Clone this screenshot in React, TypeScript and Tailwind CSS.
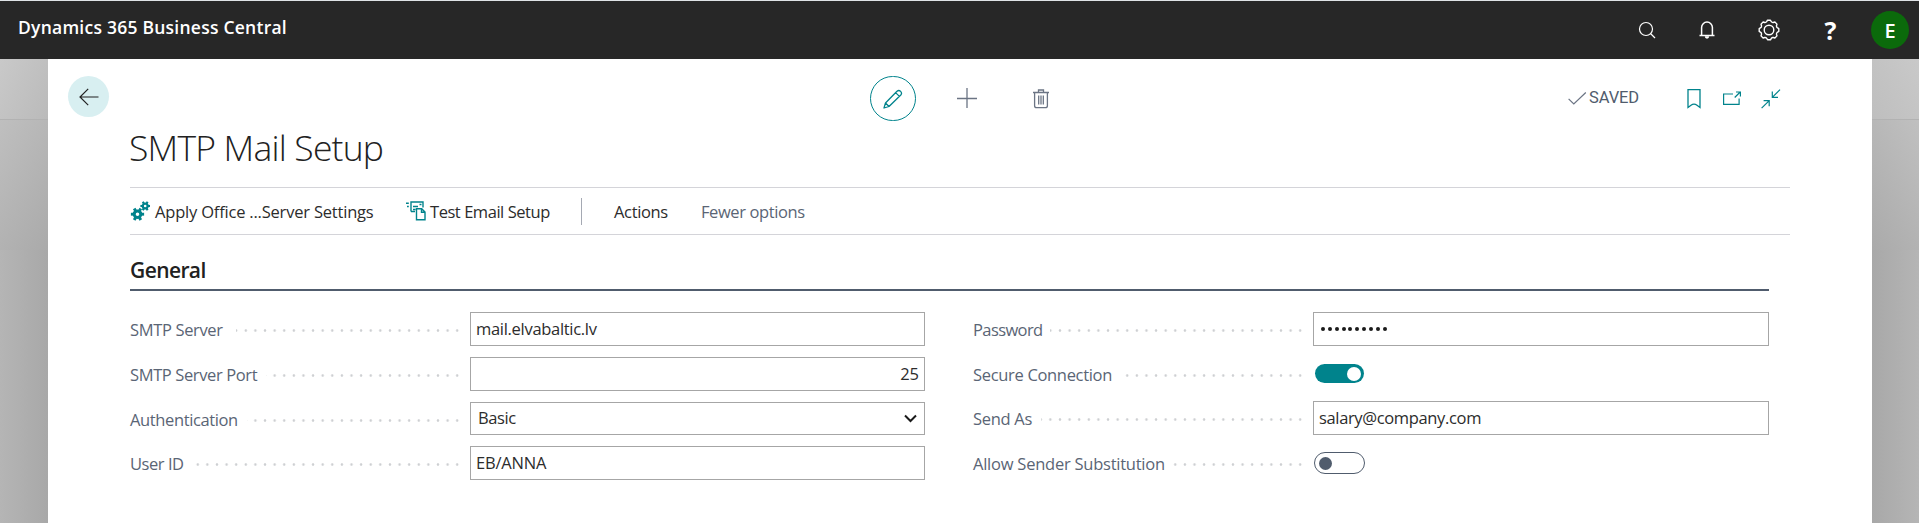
import React from "react";

type FieldProps = {
  label: string;
  labelClass: string;
  children: React.ReactNode;
  rowClass?: string;
};

function Field({ label, labelClass, children, rowClass = "h-[45px]" }: FieldProps) {
  return (
    <div className={`flex items-start ${rowClass}`}>
      <div className="flex w-[332px] shrink-0 items-center pt-[3px]">
        <span
          className={`shrink-0 whitespace-nowrap text-[16.5px] leading-[30px] text-[#5a6575] ${labelClass}`}
        >
          {label}
        </span>
        <span className="h-[9px] grow bg-[radial-gradient(circle,#cdcfd2_0.9px,transparent_1.6px)] bg-[length:9.62px_9px] bg-right bg-repeat-x" />
      </div>
      <div className="ml-[8px] grow">{children}</div>
    </div>
  );
}

function Box({ children, className = "" }: { children: React.ReactNode; className?: string }) {
  return (
    <div
      className={`flex items-center border border-[#a6a6a6] bg-white text-[16.5px] text-[#2c2c2c] ${className}`}
    >
      {children}
    </div>
  );
}

function Gear({ cx, cy, r }: { cx: number; cy: number; r: number }) {
  return (
    <g>
      <circle cx={cx} cy={cy} r={r * 0.5} fill="none" stroke="#00838c" strokeWidth={r * 0.46} />
      {[0, 60, 120, 180, 240, 300].map((a) => (
        <rect
          key={a}
          x={cx - r * 0.22}
          y={cy - r}
          width={r * 0.44}
          height={r * 0.42}
          fill="#00838c"
          transform={`rotate(${a + 30} ${cx} ${cy})`}
        />
      ))}
    </g>
  );
}

const cog = (() => {
  const pts: string[] = [];
  const n = 8;
  for (let i = 0; i < n; i++) {
    const a = (i / n) * Math.PI * 2 - Math.PI / 2;
    const p = (r: number, d: number) =>
      `${(11 + r * Math.cos(a + d)).toFixed(2)} ${(11 + r * Math.sin(a + d)).toFixed(2)}`;
    pts.push(`${i === 0 ? "M" : "L"}${p(9.9, -0.15)} L${p(9.9, 0.15)} L${p(8.6, 0.27)} Q${p(7.9, 0.39)} ${p(8.6, 0.51)}`);
  }
  return pts.join(" ") + "Z";
})();

export default function App() {
  return (
    <div className="flex h-[523px] w-full flex-col overflow-hidden bg-[#272727] font-['Open_Sans','Noto_Sans',sans-serif]">
      <div className="h-px shrink-0 bg-[#dfe3e6]" />
      <header className="flex h-[58px] shrink-0 items-center justify-between bg-[#272727] pl-[18px] pr-[10px] text-white">
        <span className="mb-[5px] whitespace-nowrap text-[17.5px] font-semibold tracking-[0.24px]">
          Dynamics 365 Business Central
        </span>
        <div className="flex items-center">
          <svg className="mr-[42px]" width="18" height="18" viewBox="0 0 18 18" fill="none" stroke="white" strokeWidth="1.2">
            <circle cx="8" cy="8" r="6.5" />
            <path d="M12.500 12.500 17 17" />
          </svg>
          <svg className="mr-[42px]" width="18" height="18" viewBox="0 0 18 18" fill="none" stroke="white" strokeWidth="1.5">
            <path d="M3.600 14.300V6.500a5.400 5.400 0 0 1 10.800 0v7.800M1.500 14.600h15" />
            <path d="M6.800 15.300a2.200 2.400 0 0 0 4.400 0z" fill="white" stroke="none" />
          </svg>
          <svg className="mr-[44px]" width="22" height="22" viewBox="0 0 22 22" fill="none" stroke="white" strokeWidth="1.4">
            <path d={cog} strokeLinejoin="round" />
            <circle cx="11" cy="11" r="4.8" />
          </svg>
          <span className="mr-[34px] w-[13px] text-center text-[25px] font-bold leading-[30px]">?</span>
          <div className="flex h-[38px] w-[38px] items-center justify-center rounded-full bg-[#0b6a0b] pt-[2px] text-[20px] font-semibold">
            E
          </div>
        </div>
      </header>

      <div className="flex grow">
        <aside className="flex w-[48px] shrink-0 flex-col">
          <div className="h-[61px] border-b border-[#b2b2b2] bg-[linear-gradient(115deg,#c9c9c9,#bababa)]" />
          <div className="h-[130px] bg-[linear-gradient(120deg,#bfbfbf,#aaaaaa)]" />
          <div className="grow bg-[linear-gradient(90deg,#b5b5b5,#a8a8a8)]" />
        </aside>

        <main className="flex grow flex-col bg-white">
          <div className="flex h-[62px] shrink-0 items-start pl-[20px] pt-[17px]">
            <div className="flex h-[41px] w-[41px] items-center justify-center rounded-full bg-[#d8eff1]">
              <svg width="20" height="18" viewBox="0 0 20 18" fill="none" stroke="#212121" strokeWidth="1.2">
                <path d="M19.500 9H1M9.200 .8 1 9l8.200 8.200" />
              </svg>
            </div>
            <div className="ml-[761px] flex h-[45px] w-[46px] items-center justify-center rounded-full border border-[#00838c]">
              <svg width="20" height="20" viewBox="0 0 20 20" fill="none" stroke="#00838c" strokeWidth="1.3" strokeLinejoin="round">
                <path d="M1 19l1.500-5L14 2.200a2.700 2.700 0 0 1 3.800 3.800L6 17.500zM2.500 14 6 17.500M12.600 3.600l3.800 3.800" />
              </svg>
            </div>
            <svg className="ml-[41px] mt-[12px]" width="20" height="20" viewBox="0 0 20 20" fill="none" stroke="#6b7484" strokeWidth="1.3">
              <path d="M0 10.500h20M10 0v20" />
            </svg>
            <svg className="ml-[55px] mt-[13px]" width="18" height="20" viewBox="0 0 18 20" fill="none" stroke="#6b7484" strokeWidth="1.3">
              <path d="M1 3.500h16M2.600 3.500v13.200a2 2 0 0 0 2 2h8.800a2 2 0 0 0 2-2V3.500M6.500 3.200V1h5v2.200M6.700 6.500v9M9 6.500v9M11.300 6.500v9" />
            </svg>
            <svg className="ml-[518px] mt-[16px]" width="19" height="13" viewBox="0 0 19 13" fill="none" stroke="#6b7484" strokeWidth="1.2">
              <path d="M.6 6.800 5.800 12 17.800.5" />
            </svg>
            <span className="ml-[2px] mt-[11px] w-[52px] whitespace-nowrap font-['Roboto',sans-serif] text-[16.5px] leading-[22px] tracking-[-0.1px] text-[#505c6d]">
              SAVED
            </span>
            <svg className="ml-[46px] mt-[13px]" width="14" height="20" viewBox="0 0 14 20" fill="none" stroke="#00838c" strokeWidth="1.3">
              <path d="M1 .700h12V18.500L10 16.300a5 5 0 0 0-6 0L1 18.500z" />
            </svg>
            <svg className="ml-[21px] mt-[14px]" width="20" height="16" viewBox="0 0 20 16" fill="none" stroke="#00838c" strokeWidth="1.200">
              <path d="M11 4H1.600V14.300h15.500V8.500M12.700 7.500l5.500-5.500M14 2h4.400v4.400" />
            </svg>
            <svg className="ml-[19px] mt-[13px]" width="20" height="20" viewBox="0 0 20 20" fill="none" stroke="#00838c" strokeWidth="1.2">
              <path d="M.6 19.200 8 11.800M2.600 11.600h5.600v5.600M19 .6 11.500 8.100M11.300 2.600v5.700h5.700" />
            </svg>
          </div>

          <h1 className="ml-[81px] h-[66px] shrink-0 whitespace-nowrap text-[35.5px] font-light leading-[52px] tracking-[-0.8px] text-[#212121]">
            SMTP Mail Setup
          </h1>

          <div className="ml-[82px] flex h-[48px] w-[1660px] shrink-0 items-center border-y border-[#d4d4d9] text-[16.5px] text-[#2c2c2c]">
            <div className="flex w-[276px] items-center">
              <svg className="mr-[4px]" width="21" height="20" viewBox="0 0 21 20">
                <Gear cx={7.500} cy={13.200} r={6.600} />
                <Gear cx={15.200} cy={5} r={4.800} />
              </svg>
              <span className="whitespace-nowrap pt-[2px] tracking-[-0.2px]">Apply Office ...Server Settings</span>
            </div>
            <div className="flex w-[175px] items-center">
              <svg className="mr-[4px]" width="20" height="20" viewBox="0 0 20 20" fill="none" stroke="#00838c" strokeWidth="1.4">
                <path d="M5 10.500V1h12v5.500M5 10.500h4M0 2.300h2.800M1 5.500h1.800M7 8.500h2.500M7 5.500h5M13.500 3.500h2M10.500 7.700V18.800h8.500V11l-3.300-3.300zM15.500 7.700V11.300H19" />
              </svg>
              <span className="whitespace-nowrap pt-[2px] tracking-[-0.45px]">Test Email Setup</span>
            </div>
            <div className="h-[27px] w-px bg-[#a5a9b3]" />
            <span className="ml-[32px] w-[87px] pt-[2px] tracking-[-0.35px]">Actions</span>
            <span className="whitespace-nowrap pt-[2px] tracking-[-0.4px] text-[#5a6575]">Fewer options</span>
          </div>

          <section className="ml-[82px] w-[1639px]">
            <h2 className="h-[56px] border-b-2 border-[#505c6d] pt-[17px] text-[21px] font-semibold leading-[36px] tracking-[-0.6px] text-[#212121]">
              General
            </h2>
            <div className="flex justify-between pt-[21px]">
              <div className="w-[795px]">
                <Field label="SMTP Server" labelClass="w-[106px] tracking-[-0.35px]">
                  <Box className="h-[34px] pl-[5px] pt-px tracking-[-0.3px]">mail.elvabaltic.lv</Box>
                </Field>
                <Field label="SMTP Server Port" labelClass="w-[136px] tracking-[-0.38px]">
                  <Box className="h-[34px] justify-end pr-[5px] pt-px">25</Box>
                </Field>
                <Field label="Authentication" labelClass="w-[117px] tracking-[-0.38px]" rowClass="h-[44px]">
                  <Box className="h-[33px] justify-between pl-[7px] pr-[7px] tracking-[-0.4px]">
                    Basic
                    <svg width="13" height="9" viewBox="0 0 13 9" fill="none" stroke="#1a1a1a" strokeWidth="2">
                      <path d="M1 1.500 6.500 7 12 1.500" />
                    </svg>
                  </Box>
                </Field>
                <Field label="User ID" labelClass="w-[65px] tracking-[-0.45px]">
                  <Box className="h-[34px] pl-[5px] pt-px tracking-[-0.2px]">EB/ANNA</Box>
                </Field>
              </div>

              <div className="w-[796px]">
                <Field label="Password" labelClass="w-[77px] tracking-[-0.6px]">
                  <Box className="h-[34px] pl-[7px]">
                    <div className="flex gap-[2.86px]">
                      {Array.from({ length: 10 }, (_, i) => (
                        <span key={i} className="h-[4px] w-[4px] rounded-full bg-[#1a1a1a]" />
                      ))}
                    </div>
                  </Box>
                </Field>
                <Field label="Secure Connection" labelClass="w-[150px] tracking-[-0.32px]" rowClass="h-[44px]">
                  <div className="ml-[2px] mt-[7px] flex h-[19px] w-[49px] items-center justify-end rounded-full bg-[#00838c] pr-[3px]">
                    <div className="h-[14px] w-[14px] rounded-full bg-white" />
                  </div>
                </Field>
                <Field label="Send As" labelClass="w-[68px] tracking-[-0.3px]">
                  <Box className="h-[34px] pl-[5px] pt-px tracking-[-0.35px]">salary@company.com</Box>
                </Field>
                <Field label="Allow Sender Substitution" labelClass="w-[198px] tracking-[-0.24px]">
                  <div className="ml-[1px] mt-[6px] flex h-[22px] w-[51px] items-center rounded-full border border-[#505c6d] pl-[4px]">
                    <div className="h-[13px] w-[13px] rounded-full bg-[#505c6d]" />
                  </div>
                </Field>
              </div>
            </div>
          </section>
        </main>

        <aside className="flex w-[47px] shrink-0 flex-col">
          <div className="h-[61px] border-b border-[#b2b2b2] bg-[linear-gradient(60deg,#bebebe,#c9c9c9)]" />
          <div className="h-[130px] bg-[linear-gradient(60deg,#aaaaaa,#c0c0c0)]" />
          <div className="grow bg-[linear-gradient(90deg,#a8a8a8,#b5b5b5)]" />
        </aside>
      </div>
    </div>
  );
}
